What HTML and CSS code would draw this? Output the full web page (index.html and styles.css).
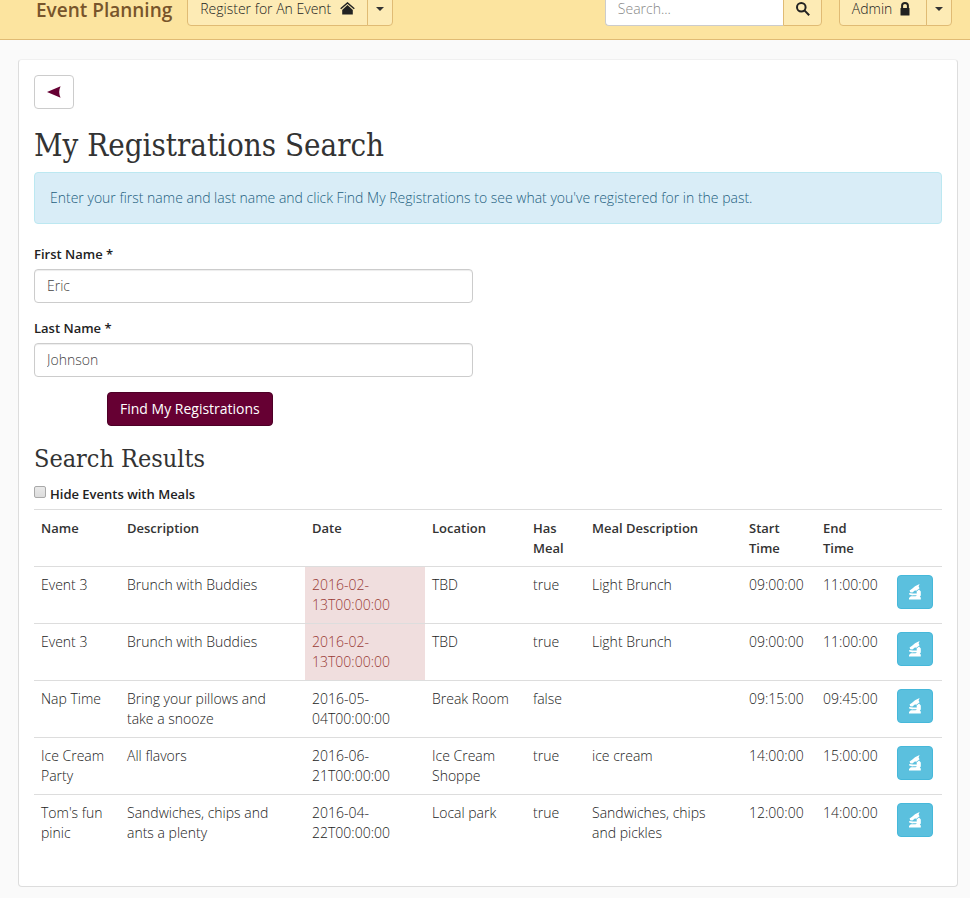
FILE: index.html
```html
<!DOCTYPE html>
<html lang="en">
<head>
<meta charset="utf-8">
<title>Event Planning</title>
<link rel="stylesheet" href="styles.css">
</head>
<body>
<svg class="sprite" aria-hidden="true">
  <symbol id="microscope" viewBox="0 0 14 16">
    <path d="M9 1.2 L11.6 0 L10.6 2.6 L11.6 4.2 L8 7 L7.2 6.2 L4.4 8.4 L2.2 8.2 L1.6 6.6 L4.4 4.4 L7 2.2 Z"/>
    <path d="M8.6 7.4 L11 5.4 L12.8 7.6 V11.4 L11.8 12.8 L12.8 13.6 V15.6 H1 V14 L2.8 12.2 H7.6 L9 11.2 H5.4 L4.4 11.6 L1.2 10.4 V9 L5 9.6 L8.8 9.4 Z"/>
  </symbol>
</svg>
<nav class="navbar">
  <a class="brand" href="#">Event Planning</a>
  <div class="btn-group">
    <button class="btn btn-gold" type="button">Register for An Event
      <svg class="icon-home" viewBox="0 0 15 13" aria-hidden="true"><path d="M7.5 3.1 L12.8 8 V12.6 H2.2 V8 Z"/><path class="roof" d="M0.7 6.8 L7.5 0.9 L14.3 6.8"/></svg>
    </button>
    <button class="btn btn-gold btn-caret" type="button" aria-label="More registration options"><span class="caret"></span></button>
  </div>
  <form class="search">
    <input class="search-input" type="text" placeholder="Search..." aria-label="Search">
    <button class="btn btn-gold btn-search" type="button" aria-label="Search"><svg class="icon-search" viewBox="0 0 14 14" aria-hidden="true"><circle cx="5.3" cy="5.3" r="4.3"/><path d="M8.4 8.4 L13.2 13.2"/></svg></button>
  </form>
  <div class="btn-group">
    <button class="btn btn-gold" type="button">Admin
      <svg class="icon-lock" viewBox="0 0 9 14" aria-hidden="true"><rect x="0" y="6" width="9" height="7.5" rx=".5"/><path class="shackle" d="M1.6 6.5 V3.6 Q1.6 1 4.5 1 T7.4 3.6 V6.5"/></svg>
    </button>
    <button class="btn btn-gold btn-caret" type="button" aria-label="More admin options"><span class="caret"></span></button>
  </div>
</nav>

<main class="panel">
  <button class="btn btn-back" type="button" aria-label="Back"><svg class="icon-back" viewBox="0 0 14 12" aria-hidden="true"><path d="M0 6 L13.6 0.2 Q10.8 6 13.6 11.8 Z"/></svg></button>
  <h1>My Registrations Search</h1>
  <div class="alert">Enter your first name and last name and click Find My Registrations to see what you've registered for in the past.</div>

  <form class="lookup">
    <label for="first">First Name *</label>
    <input class="field" id="first" type="text" value="Eric">
    <label for="last">Last Name *</label>
    <input class="field" id="last" type="text" value="Johnson">
    <button class="btn btn-primary" type="button">Find My Registrations</button>
  </form>

  <h2>Search Results</h2>
  <label class="check"><input type="checkbox"><span>Hide Events with Meals</span></label>

  <table>
    <colgroup><col class="c-name"><col><col class="c-date"><col class="c-location"><col class="c-has"><col class="c-meal"><col class="c-time"><col class="c-time"><col class="c-action"></colgroup>
    <thead>
      <tr><th>Name</th><th>Description</th><th>Date</th><th>Location</th><th>Has Meal</th><th>Meal Description</th><th>Start<br>Time</th><th>End<br>Time</th><td></td></tr>
    </thead>
    <tbody>
      <tr><td>Event 3</td><td>Brunch with Buddies</td><td class="danger">2016-02-<wbr>13T00:00:00</td><td>TBD</td><td>true</td><td>Light Brunch</td><td>09:00:00</td><td>11:00:00</td><td><button class="btn btn-info" type="button" aria-label="Details"><svg class="icon-scope" aria-hidden="true"><use href="#microscope"/></svg></button></td></tr>
      <tr><td>Event 3</td><td>Brunch with Buddies</td><td class="danger">2016-02-<wbr>13T00:00:00</td><td>TBD</td><td>true</td><td>Light Brunch</td><td>09:00:00</td><td>11:00:00</td><td><button class="btn btn-info" type="button" aria-label="Details"><svg class="icon-scope" aria-hidden="true"><use href="#microscope"/></svg></button></td></tr>
      <tr><td>Nap Time</td><td>Bring your pillows and take a snooze</td><td>2016-05-<wbr>04T00:00:00</td><td>Break Room</td><td>false</td><td></td><td>09:15:00</td><td>09:45:00</td><td><button class="btn btn-info" type="button" aria-label="Details"><svg class="icon-scope" aria-hidden="true"><use href="#microscope"/></svg></button></td></tr>
      <tr><td>Ice Cream Party</td><td>All flavors</td><td>2016-06-<wbr>21T00:00:00</td><td>Ice Cream Shoppe</td><td>true</td><td>ice cream</td><td>14:00:00</td><td>15:00:00</td><td><button class="btn btn-info" type="button" aria-label="Details"><svg class="icon-scope" aria-hidden="true"><use href="#microscope"/></svg></button></td></tr>
      <tr><td>Tom's fun pinic</td><td>Sandwiches, chips and ants a plenty</td><td>2016-04-<wbr>22T00:00:00</td><td>Local park</td><td>true</td><td>Sandwiches, chips and pickles</td><td>12:00:00</td><td>14:00:00</td><td><button class="btn btn-info" type="button" aria-label="Details"><svg class="icon-scope" aria-hidden="true"><use href="#microscope"/></svg></button></td></tr>
    </tbody>
  </table>
</main>
</body>
</html>
```
FILE: styles.css
```css
* { box-sizing: border-box; }

body {
  margin: 0;
  background: #fafafa;
  color: #222;
  font: 300 14px/20px "Open Sans", sans-serif;
}

.sprite { display: none; }
svg { fill: currentColor; }

/* The bar is pulled up so its top edge sits above the window. */
.navbar {
  display: flex;
  align-items: center;
  margin-top: -16px;
  padding: 8px 18px 13px 36px;
  background: #fce49f;
  border-bottom: 1px solid #e0bb74;
}

.brand {
  margin-right: 15px;
  padding-top: 2px;
  color: #78552b;
  font-size: 19px;
  font-weight: 600;
  text-decoration: none;
}

.btn {
  height: 34px;
  padding: 0 12px;
  border: 1px solid transparent;
  border-radius: 4px;
  font: inherit;
  white-space: nowrap;
  cursor: pointer;
}

.btn-gold { background: #fdebb5; border-color: #e0bb74; color: #222; }
.btn-group, .search { display: flex; }
.btn-group .btn:first-child { border-radius: 4px 0 0 4px; }
.btn-group .btn-caret { width: 26px; margin-left: -1px; padding: 0 8px; border-radius: 0 4px 4px 0; }
.caret { display: block; border: 4px solid transparent; border-top-color: #333; border-bottom: 0; }

.search { margin: 0 17px 0 auto; }
.search-input {
  width: 178px;
  height: 34px;
  padding: 0 12px 2px;
  border: 1px solid #ccc;
  border-right: 0;
  border-radius: 4px 0 0 4px;
  background: #fff;
  font: inherit;
}
.search-input::placeholder { color: #888; }
.btn-search { width: 39px; border-radius: 0 4px 4px 0; }

.icon-home { width: 15px; height: 13px; margin-left: 5px; vertical-align: -1px; }
.icon-lock { width: 10px; height: 14px; margin: 0 4px; vertical-align: -2px; }
.icon-search { display: block; width: 14px; height: 14px; }
.roof, .shackle, .icon-search { fill: none; stroke: currentColor; stroke-width: 2; }
.roof { stroke-width: 1.4; }

.panel {
  margin: 19px 12px 11px 18px;
  padding: 15px 15px 35px;
  background: #fff;
  border: 1px solid #ddd;
  border-top-color: #f0f0f0;
  border-radius: 4px;
}

.btn-back { display: block; width: 40px; background: #fff; border-color: #ccc; color: #660033; }
.icon-back { display: block; width: 14px; height: 12px; }

h1, h2 { color: #333; font-family: "DejaVu Serif Condensed", "DejaVu Serif", serif; font-weight: 300; }
h1 { margin: 20px 0 10px; font-size: 31px; line-height: 33px; }
h2 { margin: 20px 0 12px; font-size: 25px; line-height: 26px; }

.alert {
  padding: 15px;
  margin-bottom: 20px;
  background: #d9edf7;
  border: 1px solid #bce8f1;
  border-radius: 4px;
  color: #245f80;
}

.lookup { width: calc(50% - 15px); }
label { display: block; font-size: 13px; font-weight: 600; }
.field {
  display: block;
  width: 100%;
  height: 34px;
  margin: 5px 0 15px;
  padding: 0 12px 2px;
  background: #fff;
  border: 1px solid #ccc;
  border-radius: 4px;
  box-shadow: inset 0 1px 1px rgba(0, 0, 0, .075);
  color: #444;
  font: inherit;
}
.btn-primary { display: block; margin-left: 73px; background: #660033; border-color: #4d0026; color: #fff; font-weight: 400; }

.check { display: flex; gap: 4px; margin-bottom: 5px; }
.check input {
  appearance: none;
  width: 12px;
  height: 12px;
  margin: 2px 0 0;
  border: 1px solid #a9a9a9;
  border-radius: 2px;
  background: linear-gradient(#e9e9e9, #dcdcdc);
}

table { width: 100%; table-layout: fixed; border-collapse: collapse; }
.c-name { width: 86px; }
.c-date { width: 120px; }
.c-location { width: 101px; }
.c-has { width: 59px; }
.c-meal { width: 157px; }
.c-time { width: 74px; }
.c-action { width: 52px; }
th, td { padding: 8px 9px 8px 7px; border-top: 1px solid #ddd; text-align: left; vertical-align: top; }
th { color: #333; font-size: 13px; font-weight: 600; }
.danger { background: #f0dede; color: #993a35; }
.btn-info { display: block; width: 36px; padding: 0 10px; background: #5bc0de; border-color: #46b8da; color: #fff; }
.icon-scope { display: block; width: 14px; height: 16px; }
```
